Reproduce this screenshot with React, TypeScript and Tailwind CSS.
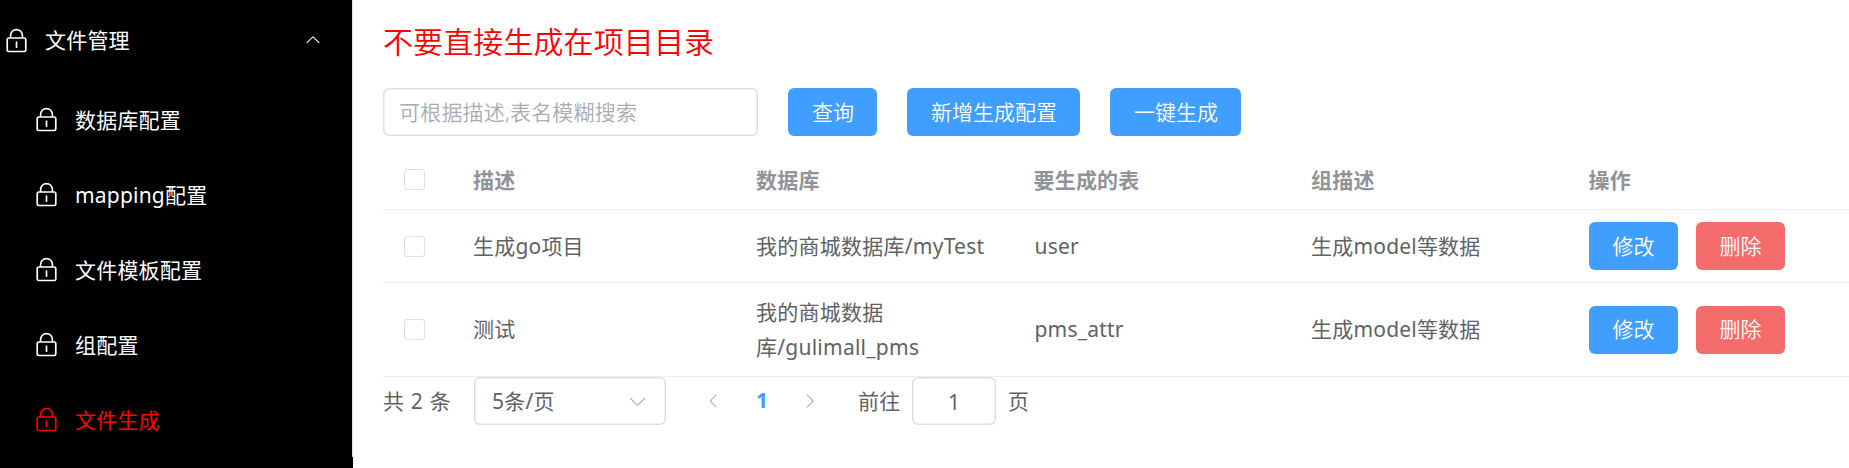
import React from "react";

const LOCK =
  "M224 448a32 32 0 0 0-32 32v384a32 32 0 0 0 32 32h576a32 32 0 0 0 32-32V480a32 32 0 0 0-32-32zm0-64h576a96 96 0 0 1 96 96v384a96 96 0 0 1-96 96H224a96 96 0 0 1-96-96V480a96 96 0 0 1 96-96M512 544a32 32 0 0 1 32 32v192a32 32 0 1 1-64 0V576a32 32 0 0 1 32-32m192-160v-64a192 192 0 1 0-384 0v64zM512 64a256 256 0 0 1 256 256v128H256V320A256 256 0 0 1 512 64";
const DOWN =
  "M831.872 340.864 512 652.672 192.128 340.864a30.592 30.592 0 0 0-42.752 0 29.12 29.12 0 0 0 0 41.6L489.6 714.24a32 32 0 0 0 44.672 0l340.288-331.712a29.12 29.12 0 0 0 0-41.728 30.592 30.592 0 0 0-42.752 0z";
const LEFT =
  "M609.408 149.376 277.76 489.6a32 32 0 0 0 0 44.672l331.648 340.352a29.12 29.12 0 0 0 41.728 0 30.592 30.592 0 0 0 0-42.752L339.264 511.936l311.872-320.128a30.592 30.592 0 0 0 0-42.624 29.12 29.12 0 0 0-41.728 0z";
const RIGHT =
  "M340.864 149.312a30.592 30.592 0 0 0 0 42.752L652.736 512 340.864 831.872a30.592 30.592 0 0 0 0 42.752 29.12 29.12 0 0 0 41.728 0L714.24 534.336a32 32 0 0 0 0-44.672L382.592 149.376a29.12 29.12 0 0 0-41.728 0z";

function Icon({ d, className }: { d: string; className: string }) {
  return (
    <svg viewBox="0 0 1024 1024" fill="currentColor" className={`shrink-0 ${className}`}>
      <path d={d} />
    </svg>
  );
}

function Button({ children, danger }: { children: React.ReactNode; danger?: boolean }) {
  return (
    <button
      className={`flex h-12 shrink-0 items-center rounded-md pr-[23px] pl-6 leading-none font-[350] tracking-normal whitespace-nowrap text-white ${
        danger ? "bg-[#f56c6c]" : "bg-[#409eff]"
      }`}
    >
      {children}
    </button>
  );
}

function Checkbox() {
  return <span className="ml-[21px] block size-[21px] rounded-[3px] border border-[#dcdfe6] bg-white" />;
}

const menu = ["数据库配置", "mapping配置", "文件模板配置", "组配置", "文件生成"];

const rows = [
  { desc: "生成go项目", db: "我的商城数据库/myTest", table: "user", group: "生成model等数据", height: "h-[73px]" },
  { desc: "测试", db: "我的商城数据库/gulimall_pms", table: "pms_attr", group: "生成model等数据", height: "h-[94px]" },
];

const grid =
  "grid w-[1468px] grid-cols-[75px_283px_277.5px_277.5px_277.5px_277.5px] items-center border-b border-[#ebeef5]";

const field = "rounded-md shadow-[inset_0_0_0_1.5px_#dcdfe6]";

export default function App() {
  return (
    <div className="flex h-[468px] w-full overflow-hidden bg-white font-['Noto_Sans','Noto_Sans_CJK_SC',sans-serif] text-[21px] tracking-[0.2px] text-[#606266]">
      <aside className="flex w-[353px] shrink-0 flex-col bg-black text-white">
        <div className="h-[457px] border-r border-[#dcdfe6]">
          <div className="flex h-20 items-center pr-[30px] pl-[3px]">
            <Icon d={LOCK} className="size-[27px]" />
            <span className="ml-[15px] flex-1 leading-none">文件管理</span>
            <Icon d={DOWN} className="size-[18px] rotate-180" />
          </div>
          <nav className="mt-[2px]">
            {menu.map((label, i) => (
              <div
                key={label}
                className={`flex h-[75px] items-center pl-[33px] ${i === menu.length - 1 ? "text-[#ff0000]" : ""}`}
              >
                <Icon d={LOCK} className="size-[27px]" />
                <span className="ml-[15px] pt-[2px] leading-none">{label}</span>
              </div>
            ))}
          </nav>
        </div>
      </aside>

      <main className="min-w-0 flex-1 overflow-hidden pl-[30px]">
        <div className="flex h-[88px] items-center pb-[5px] text-[30px] leading-none font-[350] tracking-[0.1px] text-[#ff0000]">
          不要直接生成在项目目录
        </div>
        <div className="flex gap-[30px]">
          <input
            placeholder="可根据描述,表名模糊搜索"
            className={`h-12 w-[375px] px-4 font-[350] outline-none placeholder:text-[#a8abb2] ${field}`}
          />
          <Button>查询</Button>
          <Button>新增生成配置</Button>
          <Button>一键生成</Button>
        </div>

        <div className={`mt-[14px] h-[60px] font-bold text-[#909399] ${grid}`}>
          <Checkbox />
          {["描述", "数据库", "要生成的表", "组描述", "操作"].map((h) => (
            <span key={h} className="px-[15px] pt-[2px]">
              {h}
            </span>
          ))}
        </div>
        {rows.map((r) => (
          <div key={r.desc} className={`leading-[34.5px] ${grid} ${r.height}`}>
            <Checkbox />
            <span className="px-[15px]">{r.desc}</span>
            <span className="pr-[10px] pl-[15px] tracking-[0.25px]">{r.db}</span>
            <span className="pr-[10px] pl-4">{r.table}</span>
            <span className="px-[15px]">{r.group}</span>
            <div className="flex gap-[18px] px-[15px]">
              <Button>修改</Button>
              <Button danger>删除</Button>
            </div>
          </div>
        ))}

        <div className="flex h-12 items-center">
          <span className="w-[91px] pt-px whitespace-nowrap [word-spacing:1px]">共 2 条</span>
          <div className={`flex h-12 w-48 items-center justify-between px-[18px] ${field}`}>
            <span className="pt-px">5条/页</span>
            <Icon d={DOWN} className="size-[21px] text-[#a8abb2]" />
          </div>
          <div className="ml-6 flex items-center">
            <span className="flex w-12 justify-center">
              <Icon d={LEFT} className="size-[18px] text-[#a8abb2]" />
            </span>
            <span className="w-12 text-center font-bold text-[#409eff]">1</span>
            <span className="flex w-12 justify-center">
              <Icon d={RIGHT} className="size-[18px] text-[#a8abb2]" />
            </span>
          </div>
          <span className="ml-6 w-[42px] pt-px whitespace-nowrap">前往</span>
          <span className={`ml-3 flex h-12 w-[84px] items-center justify-center pt-[3px] ${field}`}>1</span>
          <span className="ml-3 pt-px">页</span>
        </div>
      </main>
    </div>
  );
}
